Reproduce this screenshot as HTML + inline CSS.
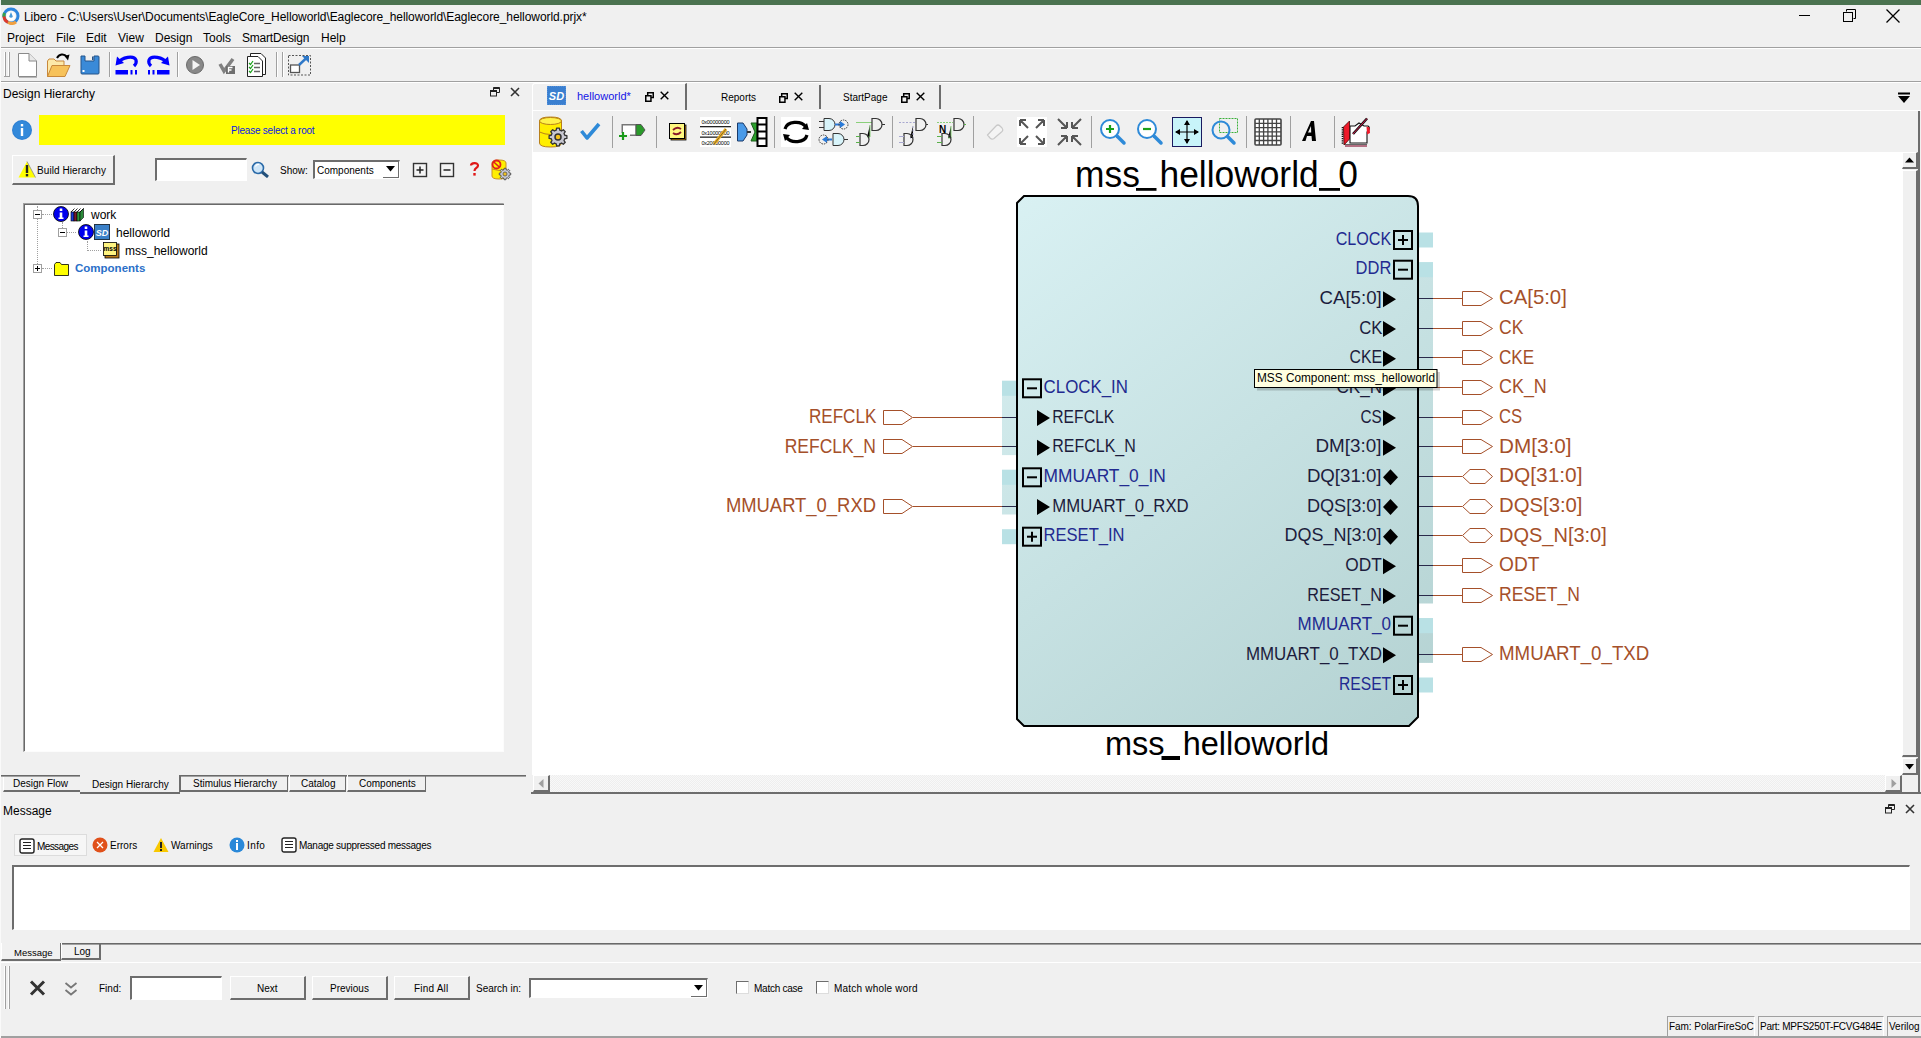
<!DOCTYPE html>
<html><head><meta charset="utf-8">
<style>
*{box-sizing:border-box}
html,body{margin:0;padding:0}
body{width:1921px;height:1038px;overflow:hidden;background:#f0f0f0;position:relative;font-family:"Liberation Sans",sans-serif;color:#000}
.a{position:absolute}
.t{position:absolute;white-space:pre;line-height:1}
.hl{position:absolute;height:1px;background:#a0a0a0}
.vl{position:absolute;width:1px;background:#a0a0a0}
.btn{position:absolute;background:#f0f0f0;border-top:1px solid #fff;border-left:1px solid #fff;border-right:2px solid #6d6d6d;border-bottom:2px solid #6d6d6d}
.inp{position:absolute;background:#fff;border-top:2px solid #6d6d6d;border-left:2px solid #6d6d6d;border-right:1px solid #fff;border-bottom:1px solid #fff}
.u12{font-size:12px}
.u10{font-size:10px}
</style></head>
<body>
<!-- top green bar -->
<div class="a" style="left:1px;top:0;width:1920px;height:5px;background:#4b7350"></div>
<div class="a" style="left:0;top:5px;width:1px;height:1033px;background:#fafafa"></div>

<!-- title bar -->
<svg class="a" style="left:2px;top:7px" width="18" height="18" viewBox="0 0 18 18">
 <circle cx="9" cy="9" r="7" fill="none" stroke="#2e86de" stroke-width="3"/>
 <path d="M2 9 A7 7 0 0 0 6 15.3" fill="none" stroke="#e03a2a" stroke-width="3"/>
 <path d="M6 15.3 A7 7 0 0 0 14 15" fill="none" stroke="#f0a040" stroke-width="3"/>
 <path d="M2.5 6 A7 7 0 0 0 2 9.5" fill="none" stroke="#3aa04a" stroke-width="3"/>
 <circle cx="9" cy="9" r="4.5" fill="#fff"/>
 <path d="M9 5 L10.8 9.5 A1.9 1.9 0 0 1 7.2 9.5 Z" fill="#4a9ad8"/>
</svg>
<div class="t u12" style="left:24px;top:11px;letter-spacing:-0.07px">Libero - C:\Users\User\Documents\EagleCore_Helloworld\Eaglecore_helloworld\Eaglecore_helloworld.prjx*</div>
<div class="a" style="left:1799px;top:15px;width:11px;height:1px;background:#000"></div>
<svg class="a" style="left:1843px;top:9px" width="13" height="13" viewBox="0 0 13 13"><path d="M3.5 2.5 V0.5 H12.5 V9.5 H10.5" fill="none" stroke="#000"/><rect x="0.5" y="3.5" width="9" height="9" fill="none" stroke="#000"/></svg>
<svg class="a" style="left:1885px;top:9px" width="16" height="14" viewBox="0 0 16 14"><path d="M1.5 0.5 L14.5 13.5 M14.5 0.5 L1.5 13.5" stroke="#000" stroke-width="1.3"/></svg>

<!-- menu -->
<div class="t u12" style="left:7px;top:32px">Project</div>
<div class="t u12" style="left:56px;top:32px">File</div>
<div class="t u12" style="left:86px;top:32px">Edit</div>
<div class="t u12" style="left:118px;top:32px">View</div>
<div class="t u12" style="left:155px;top:32px">Design</div>
<div class="t u12" style="left:203px;top:32px">Tools</div>
<div class="t u12" style="left:242px;top:32px;letter-spacing:-0.2px">SmartDesign</div>
<div class="t u12" style="left:321px;top:32px">Help</div>
<div class="hl" style="left:1px;top:47px;width:1920px"></div>
<div class="a" style="left:1px;top:48px;width:1920px;height:1px;background:#fff"></div>

<!-- main toolbar -->
<div class="a" style="left:4px;top:52px;width:1px;height:25px;background:#fff"></div>
<div class="a" style="left:5px;top:52px;width:1px;height:25px;background:#a0a0a0"></div>
<div class="a" style="left:8px;top:52px;width:1px;height:25px;background:#fff"></div>
<div class="a" style="left:9px;top:52px;width:1px;height:25px;background:#a0a0a0"></div>
<div class="a" style="left:4px;top:76px;width:6px;height:1px;background:#a0a0a0"></div>
<!-- new -->
<svg class="a" style="left:17px;top:52px" width="23" height="26" viewBox="0 0 23 26">
 <path d="M1.5 1.5 H12 L19.5 9 V24.5 H1.5 Z" fill="#fff" stroke="#8a8a8a"/>
 <path d="M12 1.5 V9 H19.5" fill="#e8e8e8" stroke="#8a8a8a"/>
 <path d="M2 25.5 H20" stroke="#b8b8b8"/>
</svg>
<!-- open -->
<svg class="a" style="left:46px;top:52px" width="26" height="26" viewBox="0 0 26 26">
 <path d="M1.5 9 L3 7 H8 L10 9 H18 V24.5 H1.5 Z" fill="#fde9a8" stroke="#c8883a"/>
 <path d="M1.5 24.5 L6 13.5 H24 L19 24.5 Z" fill="#f7c25a" stroke="#c8883a"/>
 <path d="M11 6 C13 2 18 1 21 5" fill="none" stroke="#000" stroke-width="2"/>
 <path d="M18.5 4 L23.5 2.5 L22 8.5 Z" fill="#000"/>
</svg>
<!-- save -->
<svg class="a" style="left:80px;top:55px" width="20" height="20" viewBox="0 0 20 20">
 <path d="M1 1 H5 V6 H14 V1 H18 Q19 1 19 2 V18 Q19 19 18 19 H2 Q1 19 1 18 Z" fill="#3a8ad8" stroke="#24548a"/>
 <rect x="12" y="1.5" width="1.5" height="3.5" fill="#24548a"/>
 <rect x="2.5" y="15" width="2" height="2" fill="#fff"/>
</svg>
<div class="a" style="left:109px;top:52px;width:1px;height:25px;background:#a0a0a0"></div>
<div class="a" style="left:110px;top:52px;width:1px;height:25px;background:#fff"></div>
<!-- undo -->
<svg class="a" style="left:114px;top:54px" width="26" height="23" viewBox="0 0 26 23">
 <path d="M4 9 C8 3 20 1 22 6 C23 9 21 11 20 12" fill="none" stroke="#0000ff" stroke-width="3.2"/>
 <path d="M1.5 11.5 L3 2.5 L10 9 Z" fill="#0000ff"/>
 <rect x="1.5" y="16" width="12.5" height="4.5" fill="#0000ff"/>
 <rect x="16.5" y="16" width="2" height="4.5" fill="#0000ff"/>
 <rect x="21" y="16" width="2" height="4.5" fill="#0000ff"/>
</svg>
<!-- redo -->
<svg class="a" style="left:145px;top:54px" width="26" height="23" viewBox="0 0 26 23">
 <path d="M22 9 C18 3 6 1 4 6 C3 9 5 11 6 12" fill="none" stroke="#0000ff" stroke-width="3.2"/>
 <path d="M24.5 11.5 L23 2.5 L16 9 Z" fill="#0000ff"/>
 <rect x="12" y="16" width="12.5" height="4.5" fill="#0000ff"/>
 <rect x="7.5" y="16" width="2" height="4.5" fill="#0000ff"/>
 <rect x="3" y="16" width="2" height="4.5" fill="#0000ff"/>
</svg>
<div class="a" style="left:177px;top:52px;width:1px;height:25px;background:#a0a0a0"></div>
<div class="a" style="left:178px;top:52px;width:1px;height:25px;background:#fff"></div>
<!-- play -->
<svg class="a" style="left:185px;top:55px" width="20" height="20" viewBox="0 0 20 20">
 <circle cx="10" cy="10" r="8.5" fill="#888" stroke="#6a6a6a"/>
 <path d="M7.5 5 L15 10 L7.5 15 Z" fill="#f4f4f4"/>
</svg>
<!-- check F -->
<svg class="a" style="left:218px;top:57px" width="18" height="18" viewBox="0 0 18 18">
 <path d="M2 7 L6 14 L15 2" fill="none" stroke="#808080" stroke-width="3.5"/>
 <rect x="8" y="9" width="9" height="8" fill="#6e6e6e"/>
 <path d="M10.5 15.5 V10.5 H14.5 M10.5 13 H13.5" fill="none" stroke="#fff" stroke-width="1.3"/>
</svg>
<!-- checklist -->
<svg class="a" style="left:246px;top:52px" width="22" height="26" viewBox="0 0 22 26">
 <path d="M4.5 1.5 H15 L19.5 6 V22.5 H4.5 Z" fill="#fff" stroke="#222"/>
 <path d="M1.5 4.5 H12 L16.5 9 V24.5 H1.5 Z" fill="#fff" stroke="#222"/>
 <path d="M3 11 L4.5 12.5 L7 9 M3 15 L4.5 16.5 L7 13 M3 19 L4.5 20.5 L7 17" fill="none" stroke="#1aa01a" stroke-width="1.2"/>
 <path d="M8 11.5 H14 M8 15.5 H14 M8 19.5 H14" stroke="#666" stroke-width="1.3"/>
</svg>
<div class="a" style="left:276px;top:52px;width:1px;height:25px;background:#a0a0a0"></div>
<div class="a" style="left:277px;top:52px;width:1px;height:25px;background:#fff"></div>
<div class="a" style="left:282px;top:52px;width:1px;height:25px;background:#a0a0a0"></div>
<div class="a" style="left:283px;top:52px;width:1px;height:25px;background:#fff"></div>
<!-- dashed box -->
<svg class="a" style="left:287px;top:54px" width="26" height="23" viewBox="0 0 26 23">
 <rect x="1.5" y="1.5" width="22" height="19.5" fill="none" stroke="#555" stroke-dasharray="2 1.5"/>
 <rect x="3.5" y="11" width="9" height="7.5" fill="#fff" stroke="#555" stroke-width="1.3"/>
 <path d="M12 11 L20 3.5" stroke="#2e78c8" stroke-width="2.4"/>
 <path d="M15 2 H22 V9 Z" fill="#2e78c8"/>
</svg>
<div class="hl" style="left:1px;top:81px;width:1920px"></div>
<div class="a" style="left:1px;top:82px;width:1920px;height:1px;background:#fff"></div>
<!-- LEFT PANEL -->
<div class="t u12" style="left:3px;top:88px">Design Hierarchy</div>
<svg class="a" style="left:490px;top:87px" width="10" height="10" viewBox="0 0 10 10"><path d="M3.5 3 V0.5 H9.5 V5.5 H7" fill="none" stroke="#222"/><rect x="0.5" y="3.5" width="6" height="5.5" fill="none" stroke="#222" stroke-width="1"/><rect x="0.5" y="3.5" width="6" height="1.5" fill="#222"/><rect x="3.5" y="0.5" width="6" height="1.5" fill="#222"/></svg>
<svg class="a" style="left:510px;top:87px" width="10" height="10" viewBox="0 0 10 10"><path d="M1 1 L9 9 M9 1 L1 9" stroke="#333" stroke-width="1.6"/></svg>

<svg class="a" style="left:11px;top:119px" width="22" height="22" viewBox="0 0 22 22">
 <circle cx="11" cy="11" r="10" fill="#2d7fd2"/>
 <circle cx="11" cy="11" r="9" fill="#3389da"/>
 <rect x="9.8" y="9" width="2.4" height="8" fill="#fff"/>
 <rect x="9.8" y="5" width="2.4" height="2.4" fill="#fff"/>
</svg>
<div class="a" style="left:39px;top:115px;width:466px;height:30px;background:#ffff00"></div>
<div class="t u10" style="left:231px;top:126px;color:#0a18e8;letter-spacing:-0.22px">Please select a root</div>

<div class="btn" style="left:12px;top:155px;width:103px;height:30px"></div>
<svg class="a" style="left:18px;top:161px" width="18" height="17" viewBox="0 0 18 17">
 <path d="M9 0.5 L17.5 16.5 H0.5 Z" fill="#ffff00"/>
 <path d="M9 0.5 L17.5 16.5" stroke="#888" stroke-width="0.8"/>
 <rect x="7.8" y="4" width="2.4" height="8" fill="#222"/>
 <rect x="7.8" y="13" width="2.4" height="2.4" fill="#222"/>
</svg>
<div class="t u10" style="left:37px;top:166px;letter-spacing:0.08px">Build Hierarchy</div>

<div class="inp" style="left:155px;top:158px;width:92px;height:23px"></div>
<svg class="a" style="left:251px;top:161px" width="19" height="17" viewBox="0 0 19 17">
 <circle cx="7" cy="7" r="5.5" fill="#cfe6f8" stroke="#2a6aa8" stroke-width="1.6"/>
 <path d="M4.5 5.5 A3 3 0 0 1 8 3.5" stroke="#fff" stroke-width="1.2" fill="none"/>
 <path d="M11 11 L17 16" stroke="#23507a" stroke-width="3"/>
</svg>
<div class="t u10" style="left:280px;top:166px">Show:</div>
<div class="inp" style="left:313px;top:160px;width:87px;height:19px"></div>
<div class="t u10" style="left:317px;top:166px">Components</div>
<div class="a" style="left:383px;top:162px;width:16px;height:16px;background:#fff;border-right:1px solid #6d6d6d;border-bottom:1px solid #6d6d6d"></div>
<svg class="a" style="left:386px;top:166px" width="10" height="6" viewBox="0 0 10 6"><path d="M0 0 H9 L4.5 5.5 Z" fill="#000"/></svg>
<svg class="a" style="left:412px;top:162px" width="16" height="16" viewBox="0 0 16 16"><rect x="1.5" y="1.5" width="13" height="13" fill="#f4f4f4" stroke="#333" stroke-width="1.4"/><path d="M4.5 8 H11.5 M8 4.5 V11.5" stroke="#222" stroke-width="1.5"/></svg>
<svg class="a" style="left:439px;top:162px" width="16" height="16" viewBox="0 0 16 16"><rect x="1.5" y="1.5" width="13" height="13" fill="#f4f4f4" stroke="#333" stroke-width="1.4"/><path d="M4.5 8 H11.5" stroke="#222" stroke-width="1.5"/></svg>
<svg class="a" style="left:469px;top:161px" width="11" height="16" viewBox="0 0 11 16"><path d="M2 4.5 C2 1.5 9 1 9 4.5 C9 7 5.5 7 5.5 10" fill="none" stroke="#e01818" stroke-width="2.2"/><rect x="4.3" y="12" width="2.4" height="2.6" fill="#e01818"/></svg>
<svg class="a" style="left:490px;top:159px" width="22" height="22" viewBox="0 0 22 22">
 <path d="M2 4 Q2 1 9 1 Q16 1 16 4 V17 Q16 20 9 20 Q2 20 2 17 Z" fill="#ffee00" stroke="#c89020"/>
 <path d="M2 10 Q9 13 16 10" fill="none" stroke="#c89020"/>
 <circle cx="6.5" cy="5.5" r="4" fill="none" stroke="#e02020" stroke-width="1.8"/>
 <path d="M3.8 3 L9.2 8" stroke="#e02020" stroke-width="1.6"/>
 <path d="M19.26 13.91 L20.73 14.09 L20.73 15.91 L19.26 16.09 L18.79 17.24 L19.69 18.41 L18.41 19.69 L17.24 18.79 L16.09 19.26 L15.91 20.73 L14.09 20.73 L13.91 19.26 L12.76 18.79 L11.59 19.69 L10.31 18.41 L11.21 17.24 L10.74 16.09 L9.27 15.91 L9.27 14.09 L10.74 13.91 L11.21 12.76 L10.31 11.59 L11.59 10.31 L12.76 11.21 L13.91 10.74 L14.09 9.27 L15.91 9.27 L16.09 10.74 L17.24 11.21 L18.41 10.31 L19.69 11.59 L18.79 12.76 Z" fill="#c8c8d2" stroke="#444" stroke-width="0.9"/>
 <circle cx="15" cy="15" r="2" fill="#f0c020" stroke="#555" stroke-width="0.8"/>
</svg>

<!-- tree box -->
<div class="a" style="left:23px;top:203px;width:481px;height:549px;background:#fff;border-top:2px solid #a0a0a0;border-left:2px solid #a0a0a0;border-right:1px solid #fcfcfc;border-bottom:1px solid #fcfcfc"></div>
<div class="a" style="left:24px;top:204px;width:480px;height:1px;background:#696969"></div>
<div class="a" style="left:24px;top:204px;width:1px;height:547px;background:#696969"></div>
<!-- dotted tree lines -->
<div class="a" style="left:37px;top:206px;width:1px;height:62px;border-left:1px dotted #a0a0a0"></div>
<div class="a" style="left:42px;top:214px;width:10px;height:1px;border-top:1px dotted #a0a0a0"></div>
<div class="a" style="left:42px;top:268px;width:10px;height:1px;border-top:1px dotted #a0a0a0"></div>
<div class="a" style="left:62px;top:222px;width:1px;height:6px;border-left:1px dotted #a0a0a0"></div>
<div class="a" style="left:67px;top:232px;width:9px;height:1px;border-top:1px dotted #a0a0a0"></div>
<div class="a" style="left:87px;top:241px;width:1px;height:10px;border-left:1px dotted #a0a0a0"></div>
<div class="a" style="left:87px;top:250px;width:14px;height:1px;border-top:1px dotted #a0a0a0"></div>
<!-- expanders -->
<svg class="a" style="left:33px;top:210px" width="9" height="9" viewBox="0 0 9 9"><rect x="0.5" y="0.5" width="8" height="8" fill="#fff" stroke="#a0a0a0"/><path d="M2 4.5 H7" stroke="#000"/></svg>
<svg class="a" style="left:58px;top:228px" width="9" height="9" viewBox="0 0 9 9"><rect x="0.5" y="0.5" width="8" height="8" fill="#fff" stroke="#a0a0a0"/><path d="M2 4.5 H7" stroke="#000"/></svg>
<svg class="a" style="left:33px;top:264px" width="9" height="9" viewBox="0 0 9 9"><rect x="0.5" y="0.5" width="8" height="8" fill="#fff" stroke="#a0a0a0"/><path d="M2 4.5 H7 M4.5 2 V7" stroke="#000"/></svg>
<!-- info icons -->
<svg class="a" style="left:53px;top:206px" width="16" height="16" viewBox="0 0 16 16"><circle cx="8" cy="8" r="7.5" fill="#0000ee" stroke="#000" stroke-width="0.8"/><rect x="6.7" y="6.5" width="2.6" height="6" fill="#fff"/><rect x="5.5" y="11.5" width="5" height="1.5" fill="#fff"/><rect x="6.7" y="2.5" width="2.6" height="2.5" fill="#fff"/></svg>
<svg class="a" style="left:70px;top:207px" width="15" height="15" viewBox="0 0 15 15">
 <rect x="1" y="5" width="3" height="9" fill="#1a3ad8" stroke="#000" stroke-width="0.6"/>
 <rect x="4" y="5" width="3" height="9" fill="#7a1a2a" stroke="#000" stroke-width="0.6"/>
 <rect x="7" y="5" width="3" height="9" fill="#2a9a3a" stroke="#000" stroke-width="0.6"/>
 <path d="M10 5 L13.5 1.5 V10.5 L10 14 Z" fill="#2a8a3a" stroke="#000" stroke-width="0.6"/>
 <path d="M1 5 L4.5 1.5 M4 5 L7.5 1.5 M7 5 L10.5 1.5 M10 5 L13.5 1.5" stroke="#000" stroke-width="0.8"/>
</svg>
<div class="t u12" style="left:91px;top:209px">work</div>
<svg class="a" style="left:78px;top:224px" width="16" height="16" viewBox="0 0 16 16"><circle cx="8" cy="8" r="7.5" fill="#0000ee" stroke="#000" stroke-width="0.8"/><rect x="6.7" y="6.5" width="2.6" height="6" fill="#fff"/><rect x="5.5" y="11.5" width="5" height="1.5" fill="#fff"/><rect x="6.7" y="2.5" width="2.6" height="2.5" fill="#fff"/></svg>
<svg class="a" style="left:94px;top:224px" width="16" height="16" viewBox="0 0 16 16"><rect x="0.5" y="0.5" width="15" height="15" fill="#3a80c8" stroke="#234"/><text x="8" y="11.5" text-anchor="middle" font-family="Liberation Sans" font-weight="bold" font-style="italic" font-size="9" fill="#fff">SD</text></svg>
<div class="t u12" style="left:116px;top:227px">helloworld</div>
<svg class="a" style="left:103px;top:242px" width="17" height="17" viewBox="0 0 17 17"><rect x="2" y="2" width="14" height="14" fill="#b87818" stroke="#000" stroke-width="0.8"/><rect x="0.5" y="0.5" width="13" height="13" fill="#fff480" stroke="#000" stroke-width="0.8"/><text x="7" y="9" text-anchor="middle" font-family="Liberation Sans" font-weight="bold" font-size="6.5" fill="#000">mss</text></svg>
<div class="t u12" style="left:125px;top:245px">mss_helloworld</div>
<svg class="a" style="left:54px;top:262px" width="15" height="14" viewBox="0 0 15 14"><path d="M0.5 2.5 L2 0.5 H6 L7.5 2.5 H14.5 V13.5 H0.5 Z" fill="#ffff00" stroke="#000" stroke-width="0.8"/></svg>
<div class="t" style="left:75px;top:263px;font-size:11.5px;font-weight:bold;color:#2a6fc8">Components</div>

<!-- left tabs -->
<div class="a" style="left:1px;top:775px;width:525px;height:1px;background:#696969"></div>
<div class="a" style="left:1px;top:776px;width:525px;height:1px;background:#a0a0a0"></div>
<div class="a" style="left:3px;top:777px;width:77px;height:15px;border-left:1px solid #fff;border-bottom:2px solid #6d6d6d"></div>
<div class="t u10" style="left:13px;top:779px">Design Flow</div>
<div class="a" style="left:80px;top:775px;width:100px;height:19px;background:#f0f0f0;border-bottom:2px solid #6d6d6d;border-right:1px solid #6d6d6d"></div>
<div class="t u10" style="left:92px;top:780px">Design Hierarchy</div>
<div class="a" style="left:180px;top:775px;width:108px;height:17px;border-left:1px solid #6d6d6d;border-right:1px solid #6d6d6d;border-bottom:2px solid #6d6d6d"></div>
<div class="t u10" style="left:193px;top:779px">Stimulus Hierarchy</div>
<div class="a" style="left:289px;top:775px;width:57px;height:17px;border-right:1px solid #6d6d6d;border-bottom:2px solid #6d6d6d;border-left:1px solid #fff"></div>
<div class="t u10" style="left:301px;top:779px">Catalog</div>
<div class="a" style="left:347px;top:775px;width:79px;height:17px;border-right:1px solid #6d6d6d;border-bottom:2px solid #6d6d6d;border-left:1px solid #fff"></div>
<div class="t u10" style="left:359px;top:779px">Components</div>
<!-- EDITOR TABS -->
<div class="a" style="left:532px;top:83px;width:155px;height:28px;border-left:1px solid #fff;border-top:1px solid #fff;border-right:2px solid #6d6d6d;border-top-left-radius:3px"></div>
<svg class="a" style="left:547px;top:86px" width="19" height="19" viewBox="0 0 19 19"><rect x="0" y="0" width="19" height="19" fill="#3a7fd0"/><rect x="0" y="0" width="19" height="19" fill="none" stroke="#6aa0e0" stroke-dasharray="1 1"/><text x="9.5" y="13.5" text-anchor="middle" font-family="Liberation Sans" font-weight="bold" font-style="italic" font-size="11" fill="#fff">SD</text></svg>
<div class="t" style="left:577px;top:91px;font-size:11px;color:#1414e6">helloworld*</div>
<svg class="a" style="left:645px;top:92px" width="9" height="10" viewBox="0 0 9 10"><path d="M2.7 3 V0.75 H8.25 V5.6 H6" fill="none" stroke="#000" stroke-width="1.5"/><rect x="0.75" y="3.75" width="5.2" height="5.5" fill="none" stroke="#000" stroke-width="1.5"/></svg>
<svg class="a" style="left:660px;top:91px" width="9" height="9" viewBox="0 0 9 9"><path d="M0.7 0.7 L8.3 8.3 M8.3 0.7 L0.7 8.3" stroke="#000" stroke-width="1.4"/></svg>
<div class="a" style="left:687px;top:85px;width:134px;height:24px;border-right:2px solid #6d6d6d"></div>
<div class="t u10" style="left:721px;top:93px">Reports</div>
<svg class="a" style="left:779px;top:93px" width="9" height="10" viewBox="0 0 9 10"><path d="M2.7 3 V0.75 H8.25 V5.6 H6" fill="none" stroke="#000" stroke-width="1.5"/><rect x="0.75" y="3.75" width="5.2" height="5.5" fill="none" stroke="#000" stroke-width="1.5"/></svg>
<svg class="a" style="left:794px;top:92px" width="9" height="9" viewBox="0 0 9 9"><path d="M0.7 0.7 L8.3 8.3 M8.3 0.7 L0.7 8.3" stroke="#000" stroke-width="1.4"/></svg>
<div class="a" style="left:821px;top:85px;width:120px;height:24px;border-right:2px solid #6d6d6d"></div>
<div class="t u10" style="left:843px;top:93px">StartPage</div>
<svg class="a" style="left:901px;top:93px" width="9" height="10" viewBox="0 0 9 10"><path d="M2.7 3 V0.75 H8.25 V5.6 H6" fill="none" stroke="#000" stroke-width="1.5"/><rect x="0.75" y="3.75" width="5.2" height="5.5" fill="none" stroke="#000" stroke-width="1.5"/></svg>
<svg class="a" style="left:916px;top:92px" width="9" height="9" viewBox="0 0 9 9"><path d="M0.7 0.7 L8.3 8.3 M8.3 0.7 L0.7 8.3" stroke="#000" stroke-width="1.4"/></svg>
<svg class="a" style="left:1897px;top:92px" width="14" height="12" viewBox="0 0 14 12"><rect x="1" y="0.5" width="12" height="2" fill="#000"/><path d="M1 4 H13 L7 11 Z" fill="#000"/></svg>
<div class="a" style="left:532px;top:110px;width:1389px;height:1px;background:#fff"></div>

<!-- CANVAS TOOLBAR -->
<div class="a" style="left:532px;top:111px;width:1px;height:664px;background:#fff"></div>
<!-- db gear -->
<svg class="a" style="left:538px;top:116px" width="31" height="32" viewBox="0 0 31 32">
 <path d="M1.5 5 Q1.5 1 12.5 1 Q23.5 1 23.5 5 V27 Q23.5 31 12.5 31 Q1.5 31 1.5 27 Z" fill="#ffee00" stroke="#b8801a"/>
 <ellipse cx="12.5" cy="5" rx="11" ry="3.5" fill="#fff34a" stroke="#b8801a"/>
 <path d="M1.5 16 Q12.5 21 23.5 16" fill="none" stroke="#b8801a"/>
 <path d="M26.78 19.26 L28.89 19.59 L28.89 22.41 L26.78 22.74 L26.03 24.56 L27.28 26.29 L25.29 28.28 L23.56 27.03 L21.74 27.78 L21.41 29.89 L18.59 29.89 L18.26 27.78 L16.44 27.03 L14.71 28.28 L12.72 26.29 L13.97 24.56 L13.22 22.74 L11.11 22.41 L11.11 19.59 L13.22 19.26 L13.97 17.44 L12.72 15.71 L14.71 13.72 L16.44 14.97 L18.26 14.22 L18.59 12.11 L21.41 12.11 L21.74 14.22 L23.56 14.97 L25.29 13.72 L27.28 15.71 L26.03 17.44 Z" fill="#c8c8d2" stroke="#333" stroke-width="1.3" stroke-linejoin="round"/>
 <circle cx="20" cy="21" r="3" fill="#f6c21a" stroke="#333" stroke-width="1.5"/>
</svg>
<svg class="a" style="left:580px;top:122px" width="21" height="19" viewBox="0 0 21 19"><path d="M1.5 9 L7 16 L19 2" fill="none" stroke="#2e8ad8" stroke-width="3.6" stroke-linejoin="round"/></svg>
<div class="a" style="left:612px;top:116px;width:1px;height:32px;background:#a0a0a0"></div>
<svg class="a" style="left:618px;top:123px" width="30" height="21" viewBox="0 0 30 21">
 <path d="M4.5 10 V2 H18 V12 H12" fill="#fff" stroke="#777" stroke-width="2"/>
 <rect x="5" y="2.5" width="12.5" height="9" fill="#fff"/>
 <path d="M18 1.5 H23 L27 7 L23 12.5 H18 Z" fill="#2a9a2a" stroke="#555"/>
 <path d="M1 13 H9 M5 9 V17" stroke="#1a9a1a" stroke-width="2.2"/>
</svg>
<div class="a" style="left:656px;top:116px;width:1px;height:32px;background:#a0a0a0"></div>
<svg class="a" style="left:669px;top:123px" width="18" height="18" viewBox="0 0 18 18">
 <rect x="2" y="2" width="15" height="15" fill="#c0801a" stroke="#000" stroke-width="0.8"/>
 <rect x="0.5" y="0.5" width="15" height="15" fill="#fff880" stroke="#000" stroke-width="1"/>
 <path d="M4 7 Q8 3 12 6 M12 9 Q8 13 4 10" fill="none" stroke="#8a1a2a" stroke-width="1.8"/>
</svg>
<svg class="a" style="left:700px;top:117px" width="31" height="30" viewBox="0 0 31 30">
 <rect x="0" y="0" width="31" height="30" fill="#fff"/>
 <text x="1.5" y="7" font-family="Liberation Sans" font-size="5.5" fill="#000" textLength="28">0x00000000</text>
 <rect x="0" y="9" width="31" height="1.3" fill="#222"/>
 <text x="1.5" y="17.5" font-family="Liberation Sans" font-size="5.5" fill="#000" textLength="28">0x10000000</text>
 <rect x="0" y="19.5" width="31" height="1.3" fill="#222"/>
 <text x="1.5" y="28" font-family="Liberation Sans" font-size="5.5" fill="#000" textLength="28">0x20000000</text>
 <path d="M26 12 L14 27" stroke="#f0b020" stroke-width="3"/>
 <path d="M26 12 L14 27" stroke="#333" stroke-width="0.6"/>
</svg>
<svg class="a" style="left:736px;top:117px" width="32" height="30" viewBox="0 0 32 30">
 <path d="M1.5 6 H7 L11 12 V18 L7 24 H1.5 Z" fill="#4a9ae8" stroke="#1a3a6a"/>
 <rect x="11" y="14" width="4" height="2" fill="#333"/>
 <path d="M15 6 H21 V24 H15 L19 15 Z" fill="#2aa02a" stroke="#1a5a1a"/>
 <rect x="21.5" y="1" width="9" height="28" fill="#fff" stroke="#000" stroke-width="2"/>
 <path d="M21.5 7.5 H30.5 M21.5 14.5 H30.5 M21.5 21.5 H30.5" stroke="#000" stroke-width="2"/>
</svg>
<div class="a" style="left:774px;top:116px;width:1px;height:32px;background:#a0a0a0"></div>
<svg class="a" style="left:781px;top:117px" width="30" height="30" viewBox="0 0 30 30">
 <rect x="0" y="0" width="30" height="30" fill="#fff"/>
 <path d="M4 12 C6 4 20 3 25 10" fill="none" stroke="#000" stroke-width="3.2"/>
 <path d="M21 12 L28 13 L26 6 Z" fill="#000"/>
 <path d="M26 18 C24 26 10 27 5 20" fill="none" stroke="#000" stroke-width="3.2"/>
 <path d="M9 18 L2 17 L4 24 Z" fill="#000"/>
</svg>
<svg class="a" style="left:818px;top:117px" width="31" height="30" viewBox="0 0 31 30">
 <path d="M6 1.5 H11 A6 6 0 0 1 11 13.5 H6 Z" fill="#d8f4fa" stroke="#333"/>
 <path d="M1 4.5 H6 M1 10.5 H6" stroke="#333"/>
 <path d="M17 7.5 H25" stroke="#2a7ad8" stroke-width="2"/><path d="M22 4 L27 7.5 L22 11 Z" fill="#2a7ad8"/>
 <circle cx="25.5" cy="7.5" r="4.5" fill="none" stroke="#333" stroke-dasharray="1.5 1"/>
 <path d="M15 16.5 H20 A6 6 0 0 1 20 28.5 H15 Z" fill="#d8f4fa" stroke="#333"/>
 <path d="M26 22.5 H30" stroke="#333"/>
 <path d="M6 22.5 H14" stroke="#2a7ad8" stroke-width="2"/><path d="M9 19 L4 22.5 L9 26 Z" fill="#2a7ad8"/>
 <circle cx="5.5" cy="22.5" r="4.5" fill="none" stroke="#333" stroke-dasharray="1.5 1"/>
</svg>
<svg class="a" style="left:855px;top:117px" width="31" height="30" viewBox="0 0 31 30">
 <path d="M1 5.5 H17" stroke="#8ad07a"/>
 <path d="M17 1.5 H21 A6 6 0 0 1 21 13.5 H17 Z" fill="none" stroke="#333" stroke-width="1.2"/>
 <path d="M27 7.5 H30" stroke="#333"/>
 <path d="M15 8 V20 H12" stroke="#8ad07a"/>
 <path d="M5 16.5 H8 A6 6 0 0 1 8 28.5 H5 Z" fill="none" stroke="#333" stroke-width="1.2"/>
 <path d="M1 19.5 H5 M1 25.5 H5" stroke="#5ab04a"/>
</svg>
<div class="a" style="left:892px;top:116px;width:1px;height:32px;background:#a0a0a0"></div>
<svg class="a" style="left:898px;top:117px" width="31" height="30" viewBox="0 0 31 30">
 <path d="M1 5.5 H17" stroke="#a8a8d0" stroke-dasharray="2 1.5"/>
 <path d="M18 1.5 H22 A6 6 0 0 1 22 13.5 H18 Z" fill="none" stroke="#333" stroke-width="1.2"/>
 <path d="M28 7.5 H30" stroke="#333"/>
 <path d="M15 9 V21 H12" stroke="#a8a8d0" stroke-dasharray="2 1.5"/>
 <path d="M6 16.5 H9 A6 6 0 0 1 9 28.5 H6 Z" fill="none" stroke="#333" stroke-width="1.2"/>
 <path d="M1 19.5 H6 M1 25.5 H6" stroke="#a8a8d0"/>
</svg>
<svg class="a" style="left:936px;top:117px" width="31" height="30" viewBox="0 0 31 30">
 <path d="M1 5.5 H17" stroke="#8ad07a" stroke-dasharray="2 1"/>
 <path d="M18 1.5 H22 A6 6 0 0 1 22 13.5 H18 Z" fill="none" stroke="#333" stroke-width="1.2"/>
 <path d="M28 7.5 H30" stroke="#5ab04a"/>
 <path d="M15 9 V21 H12" stroke="#8ad07a"/>
 <text x="3" y="16" font-family="Liberation Sans" font-weight="bold" font-size="10" fill="#000">N</text>
 <path d="M6 16.5 H9 A6 6 0 0 1 9 28.5 H6 Z" fill="none" stroke="#333" stroke-width="1.2"/>
 <path d="M1 19.5 H6 M1 25.5 H6" stroke="#5ab04a"/>
</svg>
<div class="a" style="left:973px;top:116px;width:1px;height:32px;background:#a0a0a0"></div>
<svg class="a" style="left:986px;top:123px" width="18" height="17" viewBox="0 0 18 17"><path d="M1.5 12 L10 3 Q12 1 14 3 L16 5 Q17.5 7 16 8.5 L8 15.5 Q6 17 4 15 Z" fill="#f4f4f4" stroke="#c8c8c8" stroke-width="1.2"/></svg>
<svg class="a" style="left:1017px;top:117px" width="30" height="30" viewBox="0 0 30 30">
 <rect x="0" y="0" width="30" height="30" fill="#fff"/>
 <path d="M3 3 L11 11 M3 3 H9 M3 3 V9 M27 3 L19 11 M27 3 H21 M27 3 V9 M3 27 L11 19 M3 27 H9 M3 27 V21 M27 27 L19 19 M27 27 H21 M27 27 V21" stroke="#555" stroke-width="2"/>
</svg>
<svg class="a" style="left:1056px;top:117px" width="27" height="30" viewBox="0 0 27 30">
 <path d="M2 2 L11 11 M11 11 H5 M11 11 V5 M25 2 L16 11 M16 11 H22 M16 11 V5 M2 28 L11 19 M11 19 H5 M11 19 V25 M25 28 L16 19 M16 19 H22 M16 19 V25" stroke="#555" stroke-width="2"/>
</svg>
<div class="a" style="left:1091px;top:116px;width:1px;height:32px;background:#a0a0a0"></div>
<svg class="a" style="left:1099px;top:118px" width="28" height="28" viewBox="0 0 28 28"><circle cx="11" cy="11" r="9" fill="#fff" stroke="#2e8ad8" stroke-width="2"/><path d="M7 11 H15 M11 7 V15" stroke="#1aa01a" stroke-width="2.2"/><path d="M18 18 L25 25" stroke="#2e8ad8" stroke-width="3.5" stroke-linecap="round"/></svg>
<svg class="a" style="left:1136px;top:118px" width="28" height="28" viewBox="0 0 28 28"><circle cx="11" cy="11" r="9" fill="#fff" stroke="#2e8ad8" stroke-width="2"/><path d="M7 11 H15" stroke="#1aa01a" stroke-width="2.2"/><path d="M18 18 L25 25" stroke="#2e8ad8" stroke-width="3.5" stroke-linecap="round"/></svg>
<div class="a" style="left:1172px;top:117px;width:30px;height:30px;background:#c8f4fa;border:1px solid #1a1a60"></div>
<svg class="a" style="left:1172px;top:117px" width="30" height="30" viewBox="0 0 30 30"><path d="M15 4 V26 M4 15 H26" stroke="#000" stroke-width="1.2"/><path d="M15 3 L12 8 H18 Z M15 27 L12 22 H18 Z M3 15 L8 12 V18 Z M27 15 L22 12 V18 Z" fill="#000"/></svg>
<svg class="a" style="left:1211px;top:117px" width="28" height="30" viewBox="0 0 28 30"><rect x="8.5" y="1.5" width="18" height="14" fill="none" stroke="#3ab03a" stroke-dasharray="2 1"/><circle cx="10" cy="13" r="8.5" fill="none" stroke="#2e8ad8" stroke-width="2"/><path d="M16.5 19.5 L23 26" stroke="#2e8ad8" stroke-width="3.5" stroke-linecap="round"/></svg>
<div class="a" style="left:1246px;top:116px;width:1px;height:32px;background:#a0a0a0"></div>
<svg class="a" style="left:1254px;top:118px" width="28" height="28" viewBox="0 0 28 28"><rect x="1" y="1" width="26" height="26" rx="1" fill="#fff" stroke="#444" stroke-width="1.6"/><path d="M5.3 1 V27 M9.6 1 V27 M13.9 1 V27 M18.2 1 V27 M22.5 1 V27 M1 5.3 H27 M1 9.6 H27 M1 13.9 H27 M1 18.2 H27 M1 22.5 H27" stroke="#444" stroke-width="1.3"/></svg>
<div class="a" style="left:1290px;top:116px;width:1px;height:32px;background:#a0a0a0"></div>
<svg class="a" style="left:1301px;top:120px" width="20" height="22" viewBox="0 0 20 22"><path d="M1 21 L10 1 H13 L15 21 H11 L10.5 16 H6 L4.5 21 Z M7 12.5 H10.2 L10 6 Z" fill="#000" fill-rule="evenodd"/></svg>
<div class="a" style="left:1334px;top:116px;width:1px;height:32px;background:#a0a0a0"></div>
<svg class="a" style="left:1340px;top:117px" width="32" height="30" viewBox="0 0 32 30">
 <path d="M10 9 H15 L19 6 L24 9 H28 Q30 10 29 13 L27 15 V26 H10 Z" fill="#fff" stroke="#111" stroke-width="1.1"/>
 <path d="M3.5 10 L9.5 4 V22 L4 28 Z" fill="#ee1a2a" stroke="#400" stroke-width="0.8"/>
 <path d="M2.5 10 V27" stroke="#111" stroke-width="1.6" stroke-dasharray="1.3 0.9"/>
 <path d="M5 27.5 H27" stroke="#666" stroke-width="1"/>
 <path d="M5 29 H27" stroke="#8a1a3a" stroke-width="1.2"/>
 <path d="M13 17 L27 1.5" stroke="#111" stroke-width="2.6"/>
 <path d="M13 17 L27 1.5" stroke="#d01a4a" stroke-width="1"/>
 <path d="M26.5 9.5 L29.5 10.5 L30 16 L27 17.5 Z" fill="#ee1a2a"/>
</svg>

<!-- scrollbars -->
<div class="a" style="left:1902px;top:152px;width:16px;height:605px;background:#f0f0f0;border-left:1px solid #fff"></div>
<div class="btn" style="left:1902px;top:152px;width:16px;height:17px"></div>
<svg class="a" style="left:1905px;top:157px" width="10" height="6" viewBox="0 0 10 6"><path d="M0 5.5 H9 L4.5 0.5 Z" fill="#000"/></svg>
<div class="btn" style="left:1902px;top:170px;width:16px;height:587px"></div>
<div class="btn" style="left:1902px;top:758px;width:16px;height:17px"></div>
<svg class="a" style="left:1905px;top:764px" width="10" height="6" viewBox="0 0 10 6"><path d="M0 0 H9 L4.5 5.5 Z" fill="#000"/></svg>
<div class="a" style="left:1918px;top:111px;width:2px;height:683px;background:#6d6d6d"></div>
<div class="a" style="left:533px;top:775px;width:1369px;height:17px;background-color:#f8f8f8;background-image:linear-gradient(45deg,#eee 25%,transparent 25%,transparent 75%,#eee 75%),linear-gradient(45deg,#eee 25%,transparent 25%,transparent 75%,#eee 75%);background-size:2px 2px;background-position:0 0,1px 1px"></div>
<div class="btn" style="left:533px;top:775px;width:17px;height:17px"></div>
<svg class="a" style="left:538px;top:779px" width="6" height="9" viewBox="0 0 6 9"><path d="M5.5 0 V9 L0.5 4.5 Z" fill="#a0a0a0"/></svg>
<div class="btn" style="left:1885px;top:775px;width:17px;height:17px"></div>
<svg class="a" style="left:1891px;top:779px" width="6" height="9" viewBox="0 0 6 9"><path d="M0.5 0 V9 L5.5 4.5 Z" fill="#a0a0a0"/></svg>
<div class="a" style="left:1902px;top:775px;width:16px;height:17px;background:#f0f0f0"></div>
<div class="a" style="left:531px;top:792px;width:1390px;height:2px;background:#6d6d6d"></div>
<div class="a" style="left:533px;top:152px;width:1369px;height:623px;background:#fff"></div>
<svg class="a" style="left:533px;top:152px" width="1369" height="623" viewBox="533 152 1369 623">
<defs><linearGradient id="bg" gradientUnits="userSpaceOnUse" x1="1016" y1="195" x2="1419" y2="727"><stop offset="0" stop-color="#d9f1f3"/><stop offset="1" stop-color="#b4d2d2"/></linearGradient></defs>
<text x="1075" y="187" font-family="Liberation Sans" font-size="37" textLength="283" lengthAdjust="spacingAndGlyphs" fill="#000">mss_helloworld_0</text>
<rect x="1070" y="188" width="300" height="6.5" fill="#fff"/>
<rect x="1136" y="188" width="20.5" height="2.8" fill="#000"/><rect x="1319" y="188" width="21" height="2.8" fill="#000"/>
<text x="1105" y="755" font-family="Liberation Sans" font-size="34" textLength="224" lengthAdjust="spacingAndGlyphs" fill="#000">mss_helloworld</text>
<rect x="1155" y="756" width="40" height="8" fill="#fff"/>
<rect x="1161.5" y="756" width="18.5" height="4" fill="#000"/>
<path d="M1017 203 L1024 196 H1408 Q1418 196 1418 206 V717 L1409 726 H1024 L1017 719 Z" fill="url(#bg)" stroke="#000" stroke-width="2"/>
<rect x="1419" y="262.2" width="14" height="341.3" fill="url(#bg)"/>
<rect x="1419" y="618.2" width="14" height="44.7" fill="url(#bg)"/>
<rect x="1419" y="232.5" width="14" height="15.0" fill="#b9e1e5"/>
<rect x="1419" y="262.2" width="14" height="15.0" fill="#b9e1e5"/>
<rect x="1419" y="618.2" width="14" height="15.0" fill="#b9e1e5"/>
<rect x="1419" y="677.5" width="14" height="15.0" fill="#b9e1e5"/>
<rect x="1002" y="380.8" width="14" height="74.3" fill="url(#bg)"/>
<rect x="1002" y="469.8" width="14" height="44.7" fill="url(#bg)"/>
<rect x="1002" y="380.8" width="14" height="15.0" fill="#b9e1e5"/>
<rect x="1002" y="469.8" width="14" height="15.0" fill="#b9e1e5"/>
<rect x="1002" y="529.2" width="14" height="15.0" fill="#b9e1e5"/>
<rect x="1394" y="231.0" width="18" height="18" fill="none" stroke="#000" stroke-width="2"/>
<path d="M1398 240.0 H1408" stroke="#000" stroke-width="2"/>
<path d="M1403 235.0 V245.0" stroke="#000" stroke-width="2"/>
<text x="1335.7" y="244.5" font-family="Liberation Sans" font-size="18" textLength="55.6" lengthAdjust="spacingAndGlyphs" fill="#222a90">CLOCK</text>
<rect x="1394" y="260.7" width="18" height="18" fill="none" stroke="#000" stroke-width="2"/>
<path d="M1398 269.7 H1408" stroke="#000" stroke-width="2"/>
<text x="1355.6" y="274.2" font-family="Liberation Sans" font-size="18" textLength="35.7" lengthAdjust="spacingAndGlyphs" fill="#222a90">DDR</text>
<text x="1319.5" y="303.8" font-family="Liberation Sans" font-size="18" textLength="62.2" lengthAdjust="spacingAndGlyphs" fill="#1c1c3c">CA[5:0]</text>
<path d="M1419 298.5 H1433" stroke="#2a2a4a" stroke-width="1"/>
<path d="M1433 298.5 H1462" stroke="#a5502a" stroke-width="1"/>
<path d="M1383 291.3 L1396 299.3 L1383 307.3 Z" fill="#000"/>
<path d="M1462.5 291.5 H1481 L1492.5 298.5 L1481 305.5 H1462.5 Z" fill="#fff" stroke="#a5502a" stroke-width="1"/>
<text x="1499" y="304.3" font-family="Liberation Sans" font-size="21" textLength="67.8" lengthAdjust="spacingAndGlyphs" fill="#a5502a">CA[5:0]</text>
<text x="1359.2" y="333.5" font-family="Liberation Sans" font-size="18" textLength="23.2" lengthAdjust="spacingAndGlyphs" fill="#1c1c3c">CK</text>
<path d="M1419 328.5 H1433" stroke="#2a2a4a" stroke-width="1"/>
<path d="M1433 328.5 H1462" stroke="#a5502a" stroke-width="1"/>
<path d="M1383 321.0 L1396 329.0 L1383 337.0 Z" fill="#000"/>
<path d="M1462.5 321.5 H1481 L1492.5 328.5 L1481 335.5 H1462.5 Z" fill="#fff" stroke="#a5502a" stroke-width="1"/>
<text x="1499" y="334.0" font-family="Liberation Sans" font-size="21" textLength="24.4" lengthAdjust="spacingAndGlyphs" fill="#a5502a">CK</text>
<text x="1349.5" y="363.2" font-family="Liberation Sans" font-size="18" textLength="32.5" lengthAdjust="spacingAndGlyphs" fill="#1c1c3c">CKE</text>
<path d="M1419 357.5 H1433" stroke="#2a2a4a" stroke-width="1"/>
<path d="M1433 357.5 H1462" stroke="#a5502a" stroke-width="1"/>
<path d="M1383 350.7 L1396 358.7 L1383 366.7 Z" fill="#000"/>
<path d="M1462.5 350.5 H1481 L1492.5 357.5 L1481 364.5 H1462.5 Z" fill="#fff" stroke="#a5502a" stroke-width="1"/>
<text x="1499" y="363.7" font-family="Liberation Sans" font-size="21" textLength="35.2" lengthAdjust="spacingAndGlyphs" fill="#a5502a">CKE</text>
<text x="1336.5" y="392.8" font-family="Liberation Sans" font-size="18" textLength="45.5" lengthAdjust="spacingAndGlyphs" fill="#1c1c3c">CK_N</text>
<path d="M1419 387.5 H1433" stroke="#2a2a4a" stroke-width="1"/>
<path d="M1433 387.5 H1462" stroke="#a5502a" stroke-width="1"/>
<path d="M1383 380.3 L1396 388.3 L1383 396.3 Z" fill="#000"/>
<path d="M1462.5 380.5 H1481 L1492.5 387.5 L1481 394.5 H1462.5 Z" fill="#fff" stroke="#a5502a" stroke-width="1"/>
<text x="1499" y="393.3" font-family="Liberation Sans" font-size="21" textLength="47.8" lengthAdjust="spacingAndGlyphs" fill="#a5502a">CK_N</text>
<text x="1360.6" y="422.5" font-family="Liberation Sans" font-size="18" textLength="21.2" lengthAdjust="spacingAndGlyphs" fill="#1c1c3c">CS</text>
<path d="M1419 417.5 H1433" stroke="#2a2a4a" stroke-width="1"/>
<path d="M1433 417.5 H1462" stroke="#a5502a" stroke-width="1"/>
<path d="M1383 410.0 L1396 418.0 L1383 426.0 Z" fill="#000"/>
<path d="M1462.5 410.5 H1481 L1492.5 417.5 L1481 424.5 H1462.5 Z" fill="#fff" stroke="#a5502a" stroke-width="1"/>
<text x="1499" y="423.0" font-family="Liberation Sans" font-size="21" textLength="23.2" lengthAdjust="spacingAndGlyphs" fill="#a5502a">CS</text>
<text x="1315.5" y="452.2" font-family="Liberation Sans" font-size="18" textLength="66.0" lengthAdjust="spacingAndGlyphs" fill="#1c1c3c">DM[3:0]</text>
<path d="M1419 446.5 H1433" stroke="#2a2a4a" stroke-width="1"/>
<path d="M1433 446.5 H1462" stroke="#a5502a" stroke-width="1"/>
<path d="M1383 439.7 L1396 447.7 L1383 455.7 Z" fill="#000"/>
<path d="M1462.5 439.5 H1481 L1492.5 446.5 L1481 453.5 H1462.5 Z" fill="#fff" stroke="#a5502a" stroke-width="1"/>
<text x="1499" y="452.7" font-family="Liberation Sans" font-size="21" textLength="72.6" lengthAdjust="spacingAndGlyphs" fill="#a5502a">DM[3:0]</text>
<text x="1306.9" y="481.8" font-family="Liberation Sans" font-size="18" textLength="74.6" lengthAdjust="spacingAndGlyphs" fill="#1c1c3c">DQ[31:0]</text>
<path d="M1419 476.5 H1433" stroke="#2a2a4a" stroke-width="1"/>
<path d="M1433 476.5 H1462" stroke="#a5502a" stroke-width="1"/>
<path d="M1383 477.3 L1390.5 469.3 L1398 477.3 L1390.5 485.3 Z" fill="#000"/>
<path d="M1462.5 476.5 L1470 469.5 H1485 L1492.5 476.5 L1485 483.5 H1470 Z" fill="#fff" stroke="#a5502a" stroke-width="1"/>
<text x="1499" y="482.3" font-family="Liberation Sans" font-size="21" textLength="83.5" lengthAdjust="spacingAndGlyphs" fill="#a5502a">DQ[31:0]</text>
<text x="1306.9" y="511.5" font-family="Liberation Sans" font-size="18" textLength="74.6" lengthAdjust="spacingAndGlyphs" fill="#1c1c3c">DQS[3:0]</text>
<path d="M1419 506.5 H1433" stroke="#2a2a4a" stroke-width="1"/>
<path d="M1433 506.5 H1462" stroke="#a5502a" stroke-width="1"/>
<path d="M1383 507.0 L1390.5 499.0 L1398 507.0 L1390.5 515.0 Z" fill="#000"/>
<path d="M1462.5 506.5 L1470 499.5 H1485 L1492.5 506.5 L1485 513.5 H1470 Z" fill="#fff" stroke="#a5502a" stroke-width="1"/>
<text x="1499" y="512.0" font-family="Liberation Sans" font-size="21" textLength="83.5" lengthAdjust="spacingAndGlyphs" fill="#a5502a">DQS[3:0]</text>
<text x="1284.6" y="541.2" font-family="Liberation Sans" font-size="18" textLength="96.9" lengthAdjust="spacingAndGlyphs" fill="#1c1c3c">DQS_N[3:0]</text>
<path d="M1419 535.5 H1433" stroke="#2a2a4a" stroke-width="1"/>
<path d="M1433 535.5 H1462" stroke="#a5502a" stroke-width="1"/>
<path d="M1383 536.7 L1390.5 528.7 L1398 536.7 L1390.5 544.7 Z" fill="#000"/>
<path d="M1462.5 535.5 L1470 528.5 H1485 L1492.5 535.5 L1485 542.5 H1470 Z" fill="#fff" stroke="#a5502a" stroke-width="1"/>
<text x="1499" y="541.7" font-family="Liberation Sans" font-size="21" textLength="107.8" lengthAdjust="spacingAndGlyphs" fill="#a5502a">DQS_N[3:0]</text>
<text x="1345.3" y="570.8" font-family="Liberation Sans" font-size="18" textLength="36.5" lengthAdjust="spacingAndGlyphs" fill="#1c1c3c">ODT</text>
<path d="M1419 565.5 H1433" stroke="#2a2a4a" stroke-width="1"/>
<path d="M1433 565.5 H1462" stroke="#a5502a" stroke-width="1"/>
<path d="M1383 558.3 L1396 566.3 L1383 574.3 Z" fill="#000"/>
<path d="M1462.5 558.5 H1481 L1492.5 565.5 L1481 572.5 H1462.5 Z" fill="#fff" stroke="#a5502a" stroke-width="1"/>
<text x="1499" y="571.3" font-family="Liberation Sans" font-size="21" textLength="40.4" lengthAdjust="spacingAndGlyphs" fill="#a5502a">ODT</text>
<text x="1307.3" y="600.5" font-family="Liberation Sans" font-size="18" textLength="74.7" lengthAdjust="spacingAndGlyphs" fill="#1c1c3c">RESET_N</text>
<path d="M1419 595.5 H1433" stroke="#2a2a4a" stroke-width="1"/>
<path d="M1433 595.5 H1462" stroke="#a5502a" stroke-width="1"/>
<path d="M1383 588.0 L1396 596.0 L1383 604.0 Z" fill="#000"/>
<path d="M1462.5 588.5 H1481 L1492.5 595.5 L1481 602.5 H1462.5 Z" fill="#fff" stroke="#a5502a" stroke-width="1"/>
<text x="1499" y="601.0" font-family="Liberation Sans" font-size="21" textLength="80.9" lengthAdjust="spacingAndGlyphs" fill="#a5502a">RESET_N</text>
<rect x="1394" y="616.7" width="18" height="18" fill="none" stroke="#000" stroke-width="2"/>
<path d="M1398 625.7 H1408" stroke="#000" stroke-width="2"/>
<text x="1297.6" y="630.2" font-family="Liberation Sans" font-size="18" textLength="93.4" lengthAdjust="spacingAndGlyphs" fill="#222a90">MMUART_0</text>
<text x="1245.9" y="659.8" font-family="Liberation Sans" font-size="18" textLength="136.1" lengthAdjust="spacingAndGlyphs" fill="#1c1c3c">MMUART_0_TXD</text>
<path d="M1419 654.5 H1433" stroke="#2a2a4a" stroke-width="1"/>
<path d="M1433 654.5 H1462" stroke="#a5502a" stroke-width="1"/>
<path d="M1383 647.3 L1396 655.3 L1383 663.3 Z" fill="#000"/>
<path d="M1462.5 647.5 H1481 L1492.5 654.5 L1481 661.5 H1462.5 Z" fill="#fff" stroke="#a5502a" stroke-width="1"/>
<text x="1499" y="660.3" font-family="Liberation Sans" font-size="21" textLength="150.3" lengthAdjust="spacingAndGlyphs" fill="#a5502a">MMUART_0_TXD</text>
<rect x="1394" y="676.0" width="18" height="18" fill="none" stroke="#000" stroke-width="2"/>
<path d="M1398 685.0 H1408" stroke="#000" stroke-width="2"/>
<path d="M1403 680.0 V690.0" stroke="#000" stroke-width="2"/>
<text x="1339.0" y="689.5" font-family="Liberation Sans" font-size="18" textLength="52.1" lengthAdjust="spacingAndGlyphs" fill="#222a90">RESET</text>
<rect x="1023" y="379.3" width="18" height="18" fill="none" stroke="#000" stroke-width="2"/>
<path d="M1027 388.3 H1037" stroke="#000" stroke-width="2"/>
<text x="1043.6" y="392.8" font-family="Liberation Sans" font-size="18" textLength="84.4" lengthAdjust="spacingAndGlyphs" fill="#222a90">CLOCK_IN</text>
<text x="1052.3" y="422.5" font-family="Liberation Sans" font-size="18" textLength="61.8" lengthAdjust="spacingAndGlyphs" fill="#1c1c3c">REFCLK</text>
<path d="M1037 410.0 L1050 418.0 L1037 426.0 Z" fill="#000"/>
<path d="M1002 417.5 H1016" stroke="#2a2a4a" stroke-width="1"/>
<path d="M913 417.5 H1002" stroke="#a5502a" stroke-width="1"/>
<path d="M883.5 410.5 H902 L912.5 417.5 L902 424.5 H883.5 Z" fill="#fff" stroke="#a5502a" stroke-width="1"/>
<text x="808.9" y="423.0" font-family="Liberation Sans" font-size="21" textLength="67.5" lengthAdjust="spacingAndGlyphs" fill="#a5502a">REFCLK</text>
<text x="1052.3" y="452.2" font-family="Liberation Sans" font-size="18" textLength="83.5" lengthAdjust="spacingAndGlyphs" fill="#1c1c3c">REFCLK_N</text>
<path d="M1037 439.7 L1050 447.7 L1037 455.7 Z" fill="#000"/>
<path d="M1002 446.5 H1016" stroke="#2a2a4a" stroke-width="1"/>
<path d="M913 446.5 H1002" stroke="#a5502a" stroke-width="1"/>
<path d="M883.5 439.5 H902 L912.5 446.5 L902 453.5 H883.5 Z" fill="#fff" stroke="#a5502a" stroke-width="1"/>
<text x="784.7" y="452.7" font-family="Liberation Sans" font-size="21" textLength="91.3" lengthAdjust="spacingAndGlyphs" fill="#a5502a">REFCLK_N</text>
<rect x="1023" y="468.3" width="18" height="18" fill="none" stroke="#000" stroke-width="2"/>
<path d="M1027 477.3 H1037" stroke="#000" stroke-width="2"/>
<text x="1043.6" y="481.8" font-family="Liberation Sans" font-size="18" textLength="122.2" lengthAdjust="spacingAndGlyphs" fill="#222a90">MMUART_0_IN</text>
<text x="1052.3" y="511.5" font-family="Liberation Sans" font-size="18" textLength="136.4" lengthAdjust="spacingAndGlyphs" fill="#1c1c3c">MMUART_0_RXD</text>
<path d="M1037 499.0 L1050 507.0 L1037 515.0 Z" fill="#000"/>
<path d="M1002 506.5 H1016" stroke="#2a2a4a" stroke-width="1"/>
<path d="M913 506.5 H1002" stroke="#a5502a" stroke-width="1"/>
<path d="M883.5 499.5 H902 L912.5 506.5 L902 513.5 H883.5 Z" fill="#fff" stroke="#a5502a" stroke-width="1"/>
<text x="725.9" y="512.0" font-family="Liberation Sans" font-size="21" textLength="150.1" lengthAdjust="spacingAndGlyphs" fill="#a5502a">MMUART_0_RXD</text>
<rect x="1023" y="527.7" width="18" height="18" fill="none" stroke="#000" stroke-width="2"/>
<path d="M1027 536.7 H1037" stroke="#000" stroke-width="2"/>
<path d="M1032 531.7 V541.7" stroke="#000" stroke-width="2"/>
<text x="1043.6" y="541.2" font-family="Liberation Sans" font-size="18" textLength="80.9" lengthAdjust="spacingAndGlyphs" fill="#222a90">RESET_IN</text>
<rect x="1257" y="372" width="183" height="18.5" fill="#000" opacity="0.18"/>
<rect x="1254.5" y="369.5" width="182.5" height="18" fill="#ffffe1" stroke="#000" stroke-width="1"/>
<text x="1257" y="382.4" font-family="Liberation Sans" font-size="12" textLength="178" lengthAdjust="spacingAndGlyphs" fill="#000">MSS Component: mss_helloworld</text>
</svg>
<!-- MESSAGE PANEL -->
<div class="t u12" style="left:3px;top:805px">Message</div>
<svg class="a" style="left:1885px;top:804px" width="10" height="10" viewBox="0 0 10 10"><path d="M3.5 3 V0.5 H9.5 V5.5 H7" fill="none" stroke="#222"/><rect x="0.5" y="3.5" width="6" height="5.5" fill="none" stroke="#222" stroke-width="1"/><rect x="0.5" y="3.5" width="6" height="1.5" fill="#222"/><rect x="3.5" y="0.5" width="6" height="1.5" fill="#222"/></svg>
<svg class="a" style="left:1905px;top:804px" width="10" height="10" viewBox="0 0 10 10"><path d="M1 1 L9 9 M9 1 L1 9" stroke="#333" stroke-width="1.6"/></svg>

<div class="a" style="left:14px;top:834px;width:73px;height:22px;background:#f6f6f6;border:1px solid #dcdcdc"></div>
<svg class="a" style="left:19px;top:838px" width="16" height="16" viewBox="0 0 16 16"><rect x="1" y="1" width="14" height="14" rx="2" fill="#fff" stroke="#222" stroke-width="1.4"/><path d="M4 4.5 H12 M4 7.5 H12 M4 10.5 H12" stroke="#222" stroke-width="1"/></svg>
<div class="t u10" style="left:37px;top:842px;letter-spacing:-0.6px">Messages</div>
<svg class="a" style="left:92px;top:837px" width="16" height="16" viewBox="0 0 16 16"><circle cx="8" cy="8" r="7.5" fill="#e0501a"/><path d="M5 5 L11 11 M11 5 L5 11" stroke="#fff" stroke-width="1.3"/></svg>
<div class="t u10" style="left:110px;top:841px">Errors</div>
<svg class="a" style="left:153px;top:837px" width="16" height="16" viewBox="0 0 16 16"><path d="M8 1 L15.5 15 H0.5 Z" fill="#f8c800"/><rect x="7" y="5" width="2" height="6" fill="#222"/><rect x="7" y="12" width="2" height="2" fill="#222"/></svg>
<div class="t u10" style="left:171px;top:841px">Warnings</div>
<svg class="a" style="left:229px;top:837px" width="16" height="16" viewBox="0 0 16 16"><circle cx="8" cy="8" r="7.5" fill="#2a88d8"/><rect x="7" y="6" width="2" height="7" fill="#fff"/><rect x="7" y="3" width="2" height="2" fill="#fff"/></svg>
<div class="t u10" style="left:247px;top:841px;letter-spacing:0.4px">Info</div>
<svg class="a" style="left:281px;top:837px" width="16" height="16" viewBox="0 0 16 16"><rect x="1" y="1" width="14" height="14" rx="2" fill="#fff" stroke="#222" stroke-width="1.4"/><path d="M4 4.5 H12 M4 7.5 H12 M4 10.5 H12" stroke="#222" stroke-width="1"/></svg>
<div class="t u10" style="left:299px;top:841px;letter-spacing:-0.26px">Manage suppressed messages</div>

<div class="inp" style="left:12px;top:865px;width:1898px;height:65px"></div>

<!-- bottom tabs -->
<div class="a" style="left:1px;top:943px;width:1920px;height:1px;background:#696969"></div>
<div class="a" style="left:1px;top:944px;width:1920px;height:1px;background:#a0a0a0"></div>
<div class="a" style="left:1px;top:943px;width:60px;height:18px;background:#f0f0f0;border-left:1px solid #fff;border-bottom:2px solid #6d6d6d;border-right:1px solid #6d6d6d"></div>
<div class="t" style="left:14px;top:948px;font-size:9.5px">Message</div>
<div class="a" style="left:61px;top:943px;width:40px;height:17px;border-right:2px solid #6d6d6d;border-bottom:2px solid #6d6d6d;border-left:1px solid #fff"></div>
<div class="t u10" style="left:74px;top:947px">Log</div>
<div class="a" style="left:1px;top:962px;width:1920px;height:1px;background:#fff"></div>

<!-- find bar -->
<div class="a" style="left:4px;top:966px;width:1px;height:43px;background:#fff"></div>
<div class="a" style="left:5px;top:966px;width:1px;height:43px;background:#a0a0a0"></div>
<div class="a" style="left:8px;top:966px;width:1px;height:43px;background:#fff"></div>
<div class="a" style="left:9px;top:966px;width:1px;height:43px;background:#a0a0a0"></div>
<svg class="a" style="left:29px;top:980px" width="17" height="16" viewBox="0 0 17 16"><path d="M2 1.5 L15 14.5 M15 1.5 L2 14.5" stroke="#333" stroke-width="3"/></svg>
<svg class="a" style="left:64px;top:981px" width="14" height="16" viewBox="0 0 14 16"><path d="M1.5 2 L7 6.5 L12.5 2 M1.5 9 L7 13.5 L12.5 9" fill="none" stroke="#777" stroke-width="1.8"/></svg>
<div class="t u10" style="left:99px;top:984px">Find:</div>
<div class="inp" style="left:130px;top:976px;width:92px;height:24px"></div>
<div class="btn" style="left:230px;top:976px;width:76px;height:24px"></div>
<div class="t u10" style="left:257px;top:984px">Next</div>
<div class="btn" style="left:312px;top:976px;width:76px;height:24px"></div>
<div class="t u10" style="left:330px;top:984px">Previous</div>
<div class="btn" style="left:394px;top:976px;width:76px;height:24px"></div>
<div class="t u10" style="left:414px;top:984px;letter-spacing:0.2px">Find All</div>
<div class="t u10" style="left:476px;top:984px">Search in:</div>
<div class="inp" style="left:529px;top:978px;width:179px;height:20px"></div>
<div class="a" style="left:691px;top:980px;width:16px;height:17px;background:#fff;border-right:1px solid #6d6d6d;border-bottom:1px solid #6d6d6d"></div>
<svg class="a" style="left:694px;top:985px" width="10" height="6" viewBox="0 0 10 6"><path d="M0 0 H9 L4.5 5.5 Z" fill="#000"/></svg>
<div class="a" style="left:736px;top:981px;width:13px;height:13px;background:#fff;border-top:1px solid #6d6d6d;border-left:1px solid #6d6d6d;border-right:1px solid #ddd;border-bottom:1px solid #ddd"></div>
<div class="t u10" style="left:754px;top:984px;letter-spacing:-0.25px">Match case</div>
<div class="a" style="left:816px;top:981px;width:13px;height:13px;background:#fff;border-top:1px solid #6d6d6d;border-left:1px solid #6d6d6d;border-right:1px solid #ddd;border-bottom:1px solid #ddd"></div>
<div class="t u10" style="left:834px;top:984px;letter-spacing:0.2px">Match whole word</div>

<!-- status bar -->
<div class="a" style="left:1667px;top:1016px;width:88px;height:20px;border-top:1px solid #a0a0a0;border-left:1px solid #a0a0a0;border-right:1px solid #fff"></div>
<div class="t u10" style="left:1669px;top:1022px;letter-spacing:-0.05px">Fam: PolarFireSoC</div>
<div class="a" style="left:1758px;top:1016px;width:126px;height:20px;border-top:1px solid #a0a0a0;border-left:1px solid #a0a0a0;border-right:1px solid #fff"></div>
<div class="t u10" style="left:1760px;top:1022px;letter-spacing:-0.28px">Part: MPFS250T-FCVG484E</div>
<div class="a" style="left:1887px;top:1016px;width:34px;height:20px;border-top:1px solid #a0a0a0;border-left:1px solid #a0a0a0"></div>
<div class="t u10" style="left:1889px;top:1022px">Verilog</div>
<div class="a" style="left:1px;top:1036px;width:1920px;height:2px;background:#a0a0a0"></div>
</body></html>
